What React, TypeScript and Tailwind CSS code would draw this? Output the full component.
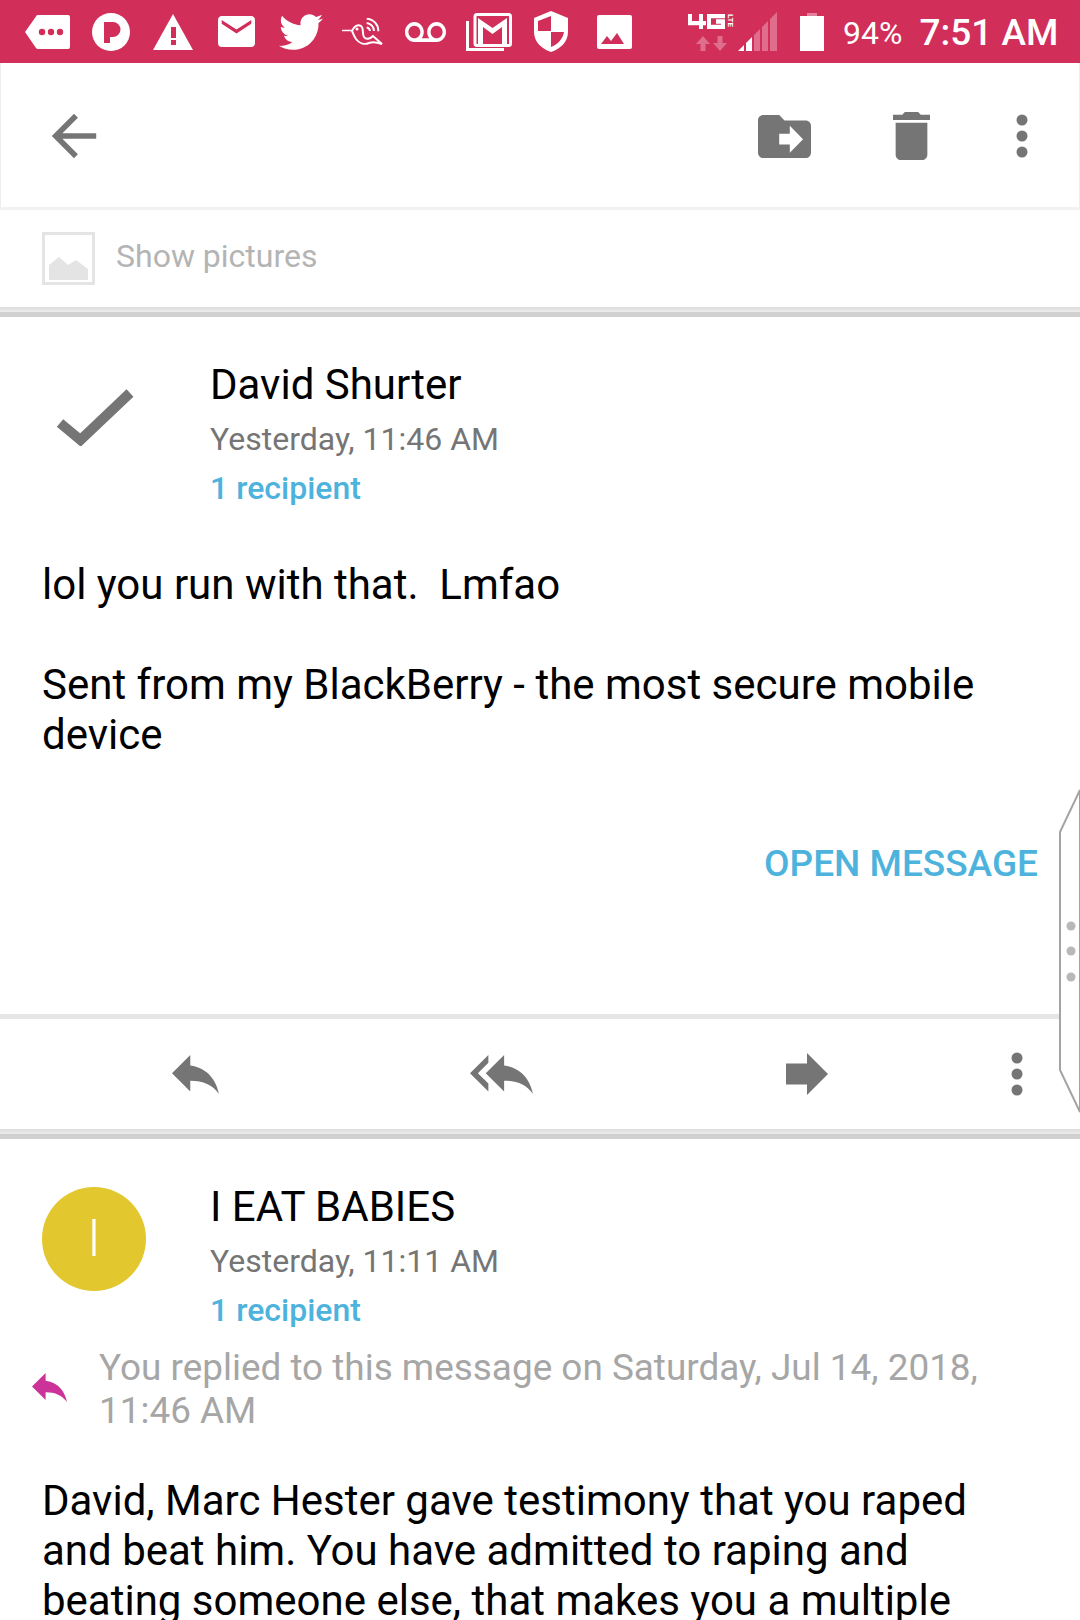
import { FaTwitter } from 'react-icons/fa'

const PINK = '#d12e5a'

function StatusIcons() {
  return (
    <>
      {/* message bubble tag */}
      <svg className="ml-[25px] w-[45px] h-[34px]" viewBox="0 0 45 34">
        <path d="M11 1.500a2 2 0 0 1 1.600-1.500H43a2 2 0 0 1 2 2v30a2 2 0 0 1-2 2H12.500a2 2 0 0 1-1.700-1.200L0 17z" fill="#fff" />
        <circle cx="17" cy="17" r="3.200" fill={PINK} />
        <circle cx="26" cy="17" r="3.200" fill={PINK} />
        <circle cx="35" cy="17" r="3.200" fill={PINK} />
      </svg>
      {/* pandora */}
      <svg className="ml-[22px] w-[38px] h-[38px]" viewBox="0 0 38 38">
        <circle cx="19" cy="19" r="19" fill="#fff" />
        <path d="M12 9h9a7.500 7.500 0 0 1 0 15h-3v6h-6z" fill={PINK} />
      </svg>
      {/* warning */}
      <svg className="ml-[23px] w-[40px] h-[36px]" viewBox="0 0 40 36">
        <path d="M20 0l20 36H0z" fill="#fff" />
        <rect x="18" y="13" width="5" height="11" fill={PINK} />
        <rect x="18" y="26" width="5" height="5" fill={PINK} />
      </svg>
      {/* mail */}
      <svg className="ml-[25px] w-[37px] h-[31px]" viewBox="2 4 20 16" preserveAspectRatio="none">
        <path fill="#fff" d="M20 4H4c-1.100 0-2 .9-2 2v12c0 1.100.9 2 2 2h16c1.100 0 2-.9 2-2V6c0-1.100-.9-2-2-2zm0 4l-8 5-8-5V6l8 5 8-5v2z" />
      </svg>
      <FaTwitter className="ml-[24px] w-[44px] h-[44px] text-white" />
      {/* hummingbird */}
      <svg className="ml-[19px] w-[41px] h-[28px]" viewBox="0 0 41 28" fill="none" stroke="#fff" strokeWidth="2">
        <path d="M0 12.500h10" strokeWidth="1.500" />
        <path d="M10 13C12 8 16 6 19 8c3 2 1 8 3 11 2 3 6 2 9-1l9 8c-6-2-10-2-13-1-5 2-10 0-13-4-2-3-3-6-4-8z" />
        <circle cx="15" cy="11" r="1.500" fill="#fff" stroke="none" />
        <path d="M24.700 9.500A4 4 0 0 1 28 13M24.700 5A8 8 0 0 1 32 13M24.700 .7A12 12 0 0 1 36.300 13.300" />
      </svg>
      {/* voicemail */}
      <svg className="ml-[22px] w-[41px] h-[20px]" viewBox="0 6 24 11" preserveAspectRatio="none">
        <path fill="#fff" d="M18.500 6C15.460 6 13 8.460 13 11.500c0 1.330.47 2.550 1.260 3.500H9.740c.79-.95 1.260-2.170 1.260-3.500C11 8.460 8.540 6 5.500 6S0 8.460 0 11.500 2.460 17 5.500 17h13c3.040 0 5.500-2.460 5.500-5.500S21.540 6 18.500 6zm-13 9C3.570 15 2 13.430 2 11.500S3.570 8 5.500 8 9 9.570 9 11.500 7.430 15 5.500 15zm13 0c-1.930 0-3.500-1.570-3.500-3.500S16.570 8 18.500 8 22 9.570 22 11.500 20.430 15 18.500 15z" />
      </svg>
      {/* gmail stack */}
      <svg className="ml-[20px] w-[46px] h-[38px]" viewBox="0 0 46 38" fill="none" stroke="#fff">
        <path d="M1.500 8v28.500H38" strokeWidth="3" />
        <rect x="9" y="1.500" width="35.500" height="31" rx="2" strokeWidth="3" />
        <path d="M12 5l14.500 10L41 5v26h-5V14l-9.500 7-9.500-7v17h-5z" fill="#fff" stroke="none" />
      </svg>
      {/* shield */}
      <svg className="ml-[22px] w-[34px] h-[41px]" viewBox="0 0 34 41">
        <path d="M17 0l17 7v14c0 10-8 17-17 20C8 38 0 31 0 21V7z" fill="#fff" />
        <path d="M17 5L4 10v10h13zM17 21v15c6-2 12-8 13-15z" fill={PINK} />
      </svg>
      {/* image */}
      <svg className="ml-[29px] w-[35px] h-[34px]" viewBox="0 0 35 34">
        <rect width="35" height="34" rx="2" fill="#fff" />
        <path d="M4 29l6-8 4 5 6-8 7 11z" fill={PINK} />
      </svg>
      {/* 4G */}
      <div className="ml-[56px] w-[46px] h-[37px] mt-[1px] flex flex-col items-center justify-between">
        <div className="w-full flex items-start justify-between">
          <svg className="w-[37px] h-[15px]" viewBox="0 0 37 14" preserveAspectRatio="none" fill="none" stroke="#fff" strokeWidth="4">
            <path d="M2 0v8.500h16M13 0v14" />
            <path d="M37 2H21v10h14V7h-7" />
          </svg>
          <span className="text-[8px] leading-[7px] font-bold text-white [writing-mode:vertical-rl]">LTE</span>
        </div>
        <svg className="w-[31px] h-[15px]" viewBox="0 0 31 15" fill="#ffffff" opacity="0.3">
          <path d="M7 0l7 8H9.500v7h-5V8H0zM24 15l7-8h-4.500V0h-5v7H17z" />
        </svg>
      </div>
      {/* signal */}
      <svg className="ml-[4px] w-[39px] h-[39px]" viewBox="0 0 39 39">
        <path d="M16 23v16h6V17zM24 15v24h6V9zM32 7v32h7V0z" fill="#ffffff" opacity="0.3" />
        <path d="M6 33v6H0zM8 31l6-6v14H8z" fill="#fff" />
      </svg>
      {/* battery */}
      <svg className="ml-[23px] w-[24px] h-[38px]" viewBox="0 0 24 38">
        <path d="M7 0h10v3H7z" fill="#ffffff" opacity="0.4" />
        <path d="M0 3h24v35H0z" fill="#fff" />
      </svg>
      <span className="ml-[19px] mt-[2px] text-[32px] leading-[38px] text-white">94%</span>
      <span className="ml-[17px] mt-[2px] text-[37px] leading-[44px] font-medium text-white whitespace-nowrap">7:51 AM</span>
    </>
  )
}

function Dots() {
  return (
    <svg className="w-[12px] h-[44px]" viewBox="0 0 12 44" fill="#757575">
      <circle cx="6" cy="6" r="5.500" />
      <circle cx="6" cy="22" r="5.500" />
      <circle cx="6" cy="38" r="5.500" />
    </svg>
  )
}

function Divider() {
  return (
    <div className="h-[10px] flex flex-col">
      <div className="h-[5px] bg-gradient-to-b from-[#dcdcdc] to-[#ececec]" />
      <div className="h-[5px] bg-[#d0d0d0]" />
    </div>
  )
}

function MessageHeader({ name, date }: { name: string; date: string }) {
  return (
    <div>
      <div className="text-[42px] leading-[50px] text-black">{name}</div>
      <div className="mt-[4px] text-[32px] leading-[50px] text-[#757575]">{date}</div>
      <div className="mt-[-1px] text-[32px] leading-[50px] font-medium text-[#4db3dd]">1 recipient</div>
    </div>
  )
}

export default function App() {
  return (
    <div className="relative w-[1080px] h-[1620px] overflow-hidden bg-white font-['Roboto',sans-serif]">
      {/* Status bar */}
      <div className="h-[63px] flex items-center bg-[#d12e5a]">
        <StatusIcons />
      </div>

      {/* Toolbar */}
      <div className="h-[147px] flex items-center border-x border-b-[3px] border-x-[#eeeeee] border-b-[#f2f2f2] pt-[2px]">
        <svg className="ml-[48px] w-[50px] h-[50px]" viewBox="3 3 18 18" fill="#757575">
          <path d="M20 11H7.830l5.590-5.590L12 4l-8 8 8 8 1.410-1.410L7.830 13H20v-2z" />
        </svg>
        <svg className="ml-[659px] w-[53px] h-[43px]" viewBox="2 4 20 16" preserveAspectRatio="none" fill="#757575">
          <path d="M20 6h-8l-2-2H4c-1.100 0-2 .9-2 2v12c0 1.100.9 2 2 2h16c1.100 0 2-.9 2-2V8c0-1.100-.9-2-2-2zm-6 12v-3h-4v-4h4V8l5 5-5 5z" />
        </svg>
        <svg className="ml-[82px] w-[37px] h-[48px]" viewBox="5 3 14 18" preserveAspectRatio="none" fill="#757575">
          <path d="M6 19c0 1.100.9 2 2 2h8c1.100 0 2-.9 2-2V7H6v12zM19 4h-3.500l-1-1h-5l-1 1H5v2h14V4z" />
        </svg>
        <div className="ml-[86px]">
          <Dots />
        </div>
      </div>

      {/* Show pictures */}
      <div className="h-[97px] flex items-center pl-[42px]">
        <svg className="w-[53px] h-[53px]" viewBox="0 0 53 53">
          <rect x="1.500" y="1.500" width="50" height="50" fill="#fff" stroke="#e4e4e4" strokeWidth="3" />
          <path d="M7 48V33l10-8 9 8 8-5 12 9v11z" fill="#e4e4e4" />
        </svg>
        <span className="ml-[21px] mb-[5px] text-[32px] leading-[40px] text-[#b4b4b4]">Show pictures</span>
      </div>

      <Divider />

      {/* First message */}
      <div className="px-[42px] pt-[43px]">
        <div className="flex">
          <svg className="mt-[28px] ml-[14px] w-[78px] h-[58px] shrink-0" viewBox="0 0 78 58" fill="none" stroke="#757575" strokeWidth="10">
            <path d="M4 35l20.500 17L74 5" />
          </svg>
          <div className="ml-[76px]">
            <MessageHeader name="David Shurter" date="Yesterday, 11:46 AM" />
          </div>
        </div>
        <div className="mt-[47px] text-[42px] leading-[50px] text-black whitespace-pre-wrap">
          {'lol you run with that.  Lmfao\n\nSent from my BlackBerry - the most secure mobile device'}
        </div>
        <div className="mt-[82px] text-right text-[37px] leading-[44px] font-medium text-[#4db3dd]">OPEN MESSAGE</div>
      </div>

      {/* Actions */}
      <div className="mt-[128px] h-[115px] border-t-[5px] border-t-[#e5e5e5] flex items-center">
        <svg className="ml-[172px] w-[47px] h-[39px]" viewBox="3 5 18 15" preserveAspectRatio="none" fill="#757575">
          <path d="M10 9V5l-7 7 7 7v-4.100c5 0 8.500 1.600 11 5.100-1-5-4-10-11-11z" />
        </svg>
        <svg className="ml-[251px] w-[63px] h-[39px]" viewBox="0 5 24 15" preserveAspectRatio="none" fill="#757575">
          <path d="M7 8V5l-7 7 7 7v-3l-4-4 4-4zm6 1V5l-7 7 7 7v-4.100c5 0 8.500 1.600 11 5.100-1-5-4-10-11-11z" />
        </svg>
        <svg className="ml-[253px] w-[42px] h-[42px]" viewBox="4 4 16 16" preserveAspectRatio="none" fill="#757575">
          <path d="M12 8V4l8 8-8 8v-4H4V8z" />
        </svg>
        <div className="ml-[183px]">
          <Dots />
        </div>
      </div>

      <Divider />

      {/* Second message */}
      <div className="px-[42px] pt-[43px]">
        <div className="flex">
          <div className="mt-[5px] w-[104px] h-[104px] shrink-0 rounded-full bg-[#e3c72e] flex items-center justify-center text-[52px] font-light text-white">
            I
          </div>
          <div className="ml-[64px]">
            <MessageHeader name="I EAT BABIES" date="Yesterday, 11:11 AM" />
          </div>
        </div>
        <div className="mt-[11px] flex items-center">
          <svg className="ml-[-10px] mb-[4px] w-[35px] h-[29px] shrink-0" viewBox="3 5 18 15" preserveAspectRatio="none" fill="#cc3399">
            <path d="M10 9V5l-7 7 7 7v-4.100c5 0 8.500 1.600 11 5.100-1-5-4-10-11-11z" />
          </svg>
          <div className="ml-[32px] text-[36.9px] leading-[43px] text-[#a6a6a6]">
            You replied to this message on Saturday, Jul 14, 2018, 11:46 AM
          </div>
        </div>
        <div className="mt-[44px] text-[42px] leading-[50px] text-black">
          David, Marc Hester gave testimony that you raped and beat him. You have admitted to raping and beating someone else, that makes you a multiple
        </div>
      </div>

      {/* Edge panel handle */}
      <svg className="absolute left-[1058px] top-[788px] w-[22px] h-[326px]" viewBox="0 0 22 326">
        <path d="M22 2L2 44v238l20 42z" fill="#fff" stroke="#a3a3a3" strokeWidth="2" />
        <circle cx="13" cy="138" r="4.500" fill="#b8b8b8" />
        <circle cx="13" cy="163" r="4.500" fill="#b8b8b8" />
        <circle cx="13" cy="189" r="4.500" fill="#b8b8b8" />
      </svg>
    </div>
  )
}
